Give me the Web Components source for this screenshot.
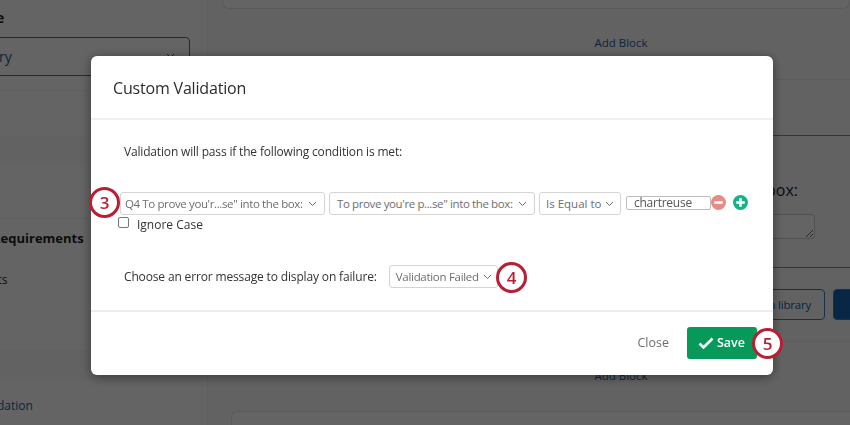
<!DOCTYPE html>
<html>
<head>
<meta charset="utf-8">
<title>Custom Validation</title>
<style>
    html, body { margin: 0; padding: 0; height: 100%; overflow: hidden; }
    body { font-family: "Open Sans", "Noto Sans", sans-serif; }
</style>
</head>
<body>
<survey-page>
    <survey-sidebar slot="side"></survey-sidebar>
    <survey-canvas slot="main"></survey-canvas>
</survey-page>

<modal-backdrop>
    <validation-modal></validation-modal>
</modal-backdrop>

<script>
//page behind the dialog
var template_page = document.createElement("template");
template_page.innerHTML = `
<style>
    :host { display: flex; width: 850px; height: 425px; overflow: hidden; background: #f6f6f6; }
    .side { display: block; width: 208px; flex: none; }
    .main { display: block; flex: 1; min-width: 0; }
</style>
<div class="side"><slot name="side"></slot></div>
<div class="main"><slot name="main"></slot></div>
`;
class SurveyPage extends HTMLElement {
    constructor() {
        super();
        this.attachShadow({ mode: "open" }).appendChild(template_page.content.cloneNode(true));
    }
}
customElements.define("survey-page", SurveyPage);

var template_sidebar = document.createElement("template");
template_sidebar.innerHTML = `
<style>
    :host { display: block; height: 425px; background: #fafafa; border-right: 1px solid #eee; box-sizing: border-box; color: #1f1f1f; font-size: 13px; overflow: hidden; }
    .title { height: 37px; line-height: 36px; font-weight: 700; margin-left: -29px; font-size: 14px; }
    .lib { display: flex; align-items: flex-start; justify-content: space-between; height: 39px; margin-left: -20px; width: 210px; box-sizing: border-box; padding-right: 14px; border: 1px solid #3a6ea5; border-radius: 4px; color: #1b5aa0; font-size: 14px; line-height: 37px; }
    .lib span { margin-left: -15px; }
    .lib svg { width: 9px; height: 6px; margin-top: 15px; }
    .gap1 { height: 14px; border-bottom: 1px solid #f0f0f0; }
    .band { height: 30px; background: #f5f5f5; margin-top: 44px; }
    .req { margin-top: 53px; padding: 9px 0 0 0; border-top: 1px solid #efefef; font-weight: 700; font-size: 13px; line-height: 20px; }
    .req span { margin-left: -8px; display: block; }
    .row { margin-top: 23px; margin-left: -26px; font-size: 12px; line-height: 18px; }
    .band2 { height: 30px; background: #f5f5f5; margin-top: 61px; }
    .link { margin-top: 17px; margin-left: -23px; color: #1b5aa0; font-size: 12px; line-height: 18px; }
</style>
<div class="title">Type</div>
<div class="lib"><span>Library</span><svg viewBox="0 0 9 6"><path d="M1 1l3.5 3.5L8 1" fill="none" stroke="#1b5aa0" stroke-width="1"/></svg></div>
<div class="gap1"></div>
<div class="band"></div>
<div class="req"><span>Requirements</span></div>
<div class="row">Limits</div>
<div class="band2"></div>
<div class="link">Validation</div>
`;
class SurveySidebar extends HTMLElement {
    constructor() {
        super();
        this.attachShadow({ mode: "open" }).appendChild(template_sidebar.content.cloneNode(true));
    }
}
customElements.define("survey-sidebar", SurveySidebar);

var template_canvas = document.createElement("template");
template_canvas.innerHTML = `
<style>
    :host { display: block; height: 425px; overflow: hidden; color: #1f1f1f; }
    .card-end { height: 8px; margin-left: 14px; border: 1px solid #e0e0e0; border-top: 0; border-radius: 0 0 6px 6px; background: #f9f9f9; }
    .add { box-sizing: border-box; width: 826px; text-align: center; color: #1b5aa0; font-size: 11.5px; line-height: 18px; }
    .a1 { margin-top: 25px; }
    .block { margin-top: 27px; margin-left: 14px; height: 263px; box-sizing: border-box; border-top: 1px solid #e6e6e6; border-bottom: 1px solid #e6e6e6; display: flex; flex-direction: column; align-items: flex-end; }
    .q { width: 100%; height: 133px; box-sizing: border-box; margin-top: 55px; border-top: 1px solid #5b8fc7; border-bottom: 1px solid #5b8fc7; display: flex; flex-direction: column; align-items: flex-end; }
    .qt { font-size: 16px; line-height: 22px; margin-top: 43px; padding-right: 52px; }
    textarea { width: 100px; height: 25px; margin: 13px 35px 0 0; padding: 0; box-sizing: border-box; border: 1px solid #c8c8c8; border-radius: 3px; background: #fafafa; display: block; }
    .btns { display: flex; gap: 8px; margin-top: 21px; margin-right: -43px; }
    .b { height: 31px; box-sizing: border-box; border: 1px solid #3a7ac0; border-radius: 4px; color: #1b5aa0; font-size: 11.5px; letter-spacing: -.2px; line-height: 29px; padding: 0 13px; white-space: nowrap; }
    .b.fill { width: 60px; background: #1460b0; }
    .a2 { margin-top: 25px; }
    .card-next { margin-top: 26px; margin-left: 23px; height: 30px; border: 1px solid #e0e0e0; border-radius: 6px 0 0 0; border-right: 0; background: #f9f9f9; }
</style>
<div class="card-end"></div>
<div class="add a1">Add Block</div>
<div class="block">
    <div class="q">
        <div class="qt">box:</div>
        <textarea></textarea>
    </div>
    <div class="btns"><div class="b">Import from library</div><div class="b fill"></div></div>
</div>
<div class="add a2">Add Block</div>
<div class="card-next"></div>
`;
class SurveyCanvas extends HTMLElement {
    constructor() {
        super();
        this.attachShadow({ mode: "open" }).appendChild(template_canvas.content.cloneNode(true));
    }
}
customElements.define("survey-canvas", SurveyCanvas);

//dialog
var template_backdrop = document.createElement("template");
template_backdrop.innerHTML = `
<style>
    :host { display: block; position: fixed; left: 0; top: 0; width: 850px; height: 425px; background: rgba(0, 0, 0, 0.6); }
    .wrap { box-sizing: border-box; height: 100%; padding: 56px 77px 50px 91px; }
</style>
<div class="wrap"><slot></slot></div>
`;
class ModalBackdrop extends HTMLElement {
    constructor() {
        super();
        this.attachShadow({ mode: "open" }).appendChild(template_backdrop.content.cloneNode(true));
    }
}
customElements.define("modal-backdrop", ModalBackdrop);

var template_select = document.createElement("template");
template_select.innerHTML = `
<style>
    :host { display: inline-flex; align-items: center; justify-content: space-between; box-sizing: border-box; height: 23px; padding: 0 7px 0 6px; background: #fff; border: 1px solid #d4d4d4; border-radius: 3px; color: #6e6e6e; font-size: 11.5px; white-space: nowrap; }
    svg { width: 9px; height: 6px; margin-left: 4px; flex: none; }
</style>
<slot></slot>
<svg viewBox="0 0 9 6"><path d="M1 1l3.5 3.5L8 1" fill="none" stroke="#6e6e6e" stroke-width="1"/></svg>
`;
class SelectBox extends HTMLElement {
    constructor() {
        super();
        this.attachShadow({ mode: "open" }).appendChild(template_select.content.cloneNode(true));
    }
}
customElements.define("select-box", SelectBox);

var template_callout = document.createElement("template");
template_callout.innerHTML = `
<style>
    :host { display: flex; align-items: center; justify-content: center; position: absolute; box-sizing: border-box; width: 31px; height: 31px; background: #fff; border: 3px solid #b81f33; border-radius: 50%; color: #b81f33; font-size: 17px; font-weight: 600; }
</style>
<slot></slot>
`;
class StepCallout extends HTMLElement {
    constructor() {
        super();
        this.attachShadow({ mode: "open" }).appendChild(template_callout.content.cloneNode(true));
    }
}
customElements.define("step-callout", StepCallout);

var template_modal = document.createElement("template");
template_modal.innerHTML = `
<style>
    :host { display: block; position: relative; width: 682px; height: 319px; background: #fff; border-radius: 6px; box-shadow: 0 2px 12px rgba(0,0,0,.45); color: #333; font-size: 12px; }
    header { box-sizing: border-box; height: 64px; padding: 21px 22px 0; border-bottom: 2px solid #f0f0f0; font-size: 16px; letter-spacing: -.18px; line-height: 22px; color: #2b2b2b; }
    .body { box-sizing: border-box; height: 192px; padding: 23px 0 0 33px; border-bottom: 2px solid #ececec; }
    .lead { line-height: 18px; letter-spacing: -.17px; }
    .cond { display: flex; align-items: center; margin: 31px 0 0 -4px; }
    .cond select-box + select-box { margin-left: 4px; }
    .s1 { width: 205px; padding-left: 4px; letter-spacing: -.38px; }
    .s2 { width: 206px; padding-left: 7px; letter-spacing: -.38px; }
    .s3 { width: 82px; }
    .val { box-sizing: border-box; width: 85px; height: 14px; margin: -2px 0 0 5px; padding-left: 7px; border: 1px solid #bdbdbd; border-radius: 2px; color: #555; font-size: 12px; letter-spacing: -.25px; line-height: 11px; }
    .round { width: 15px; height: 15px; flex: none; margin-top: -2px; }
    .plus { margin-left: 7px; }
    .ignore { display: flex; align-items: flex-start; margin: 1px 0 0 -6px; line-height: 18px; }
    .box { box-sizing: border-box; width: 11px; height: 11px; margin-top: 1px; border: 1px solid #767676; border-radius: 2px; }
    .ignore span { margin-left: 8px; }
    .err { display: flex; align-items: center; margin-top: 31px; letter-spacing: -.15px; }
    .err select-box { margin-left: 12px; width: 109px; letter-spacing: -.3px; }
    footer { display: flex; justify-content: flex-end; align-items: center; height: 63px; box-sizing: border-box; padding: 0 16px 2px 0; }
    .close { color: #6e6e6e; font-size: 12.5px; margin-right: 18px; }
    .save { display: flex; align-items: center; box-sizing: border-box; width: 70px; height: 32px; padding-left: 11px; background: #07995a; border-radius: 3px; color: #fff; font-size: 12.5px; font-weight: 600; }
    .save svg { width: 16px; height: 12px; margin-right: 3px; }
    .c3 { left: -2px; top: 131px; }
    .c4 { left: 405px; top: 206px; }
    .c5 { left: 661px; top: 272px; }
</style>
<header>Custom Validation</header>
<div class="body">
    <div class="lead">Validation will pass if the following condition is met:</div>
    <div class="cond">
        <select-box class="s1">Q4 To prove you'r...se" into the box:</select-box>
        <select-box class="s2">To prove you're p...se" into the box:</select-box>
        <select-box class="s3">Is Equal to</select-box>
        <div class="val">chartreuse</div>
        <svg class="round minus" viewBox="0 0 14 14"><circle cx="7" cy="7" r="7" fill="#e98b85"/><rect x="3" y="5.8" width="8" height="2.4" fill="#fff"/></svg>
        <svg class="round plus" viewBox="0 0 14 14"><circle cx="7" cy="7" r="7" fill="#15b28a"/><path d="M3 7h8M7 3v8" stroke="#fff" stroke-width="2.4"/></svg>
    </div>
    <div class="ignore"><div class="box"></div><span>Ignore Case</span></div>
    <div class="err"><span>Choose an error message to display on failure:</span><select-box>Validation Failed</select-box></div>
</div>
<footer>
    <div class="close">Close</div>
    <div class="save"><svg viewBox="0 0 16 12"><path d="M1.5 6.5l4 4L14.5 1.5" fill="none" stroke="#fff" stroke-width="2.6"/></svg>Save</div>
</footer>
<step-callout class="c3">3</step-callout>
<step-callout class="c4">4</step-callout>
<step-callout class="c5">5</step-callout>
`;
class ValidationModal extends HTMLElement {
    constructor() {
        super();
        this.attachShadow({ mode: "open" }).appendChild(template_modal.content.cloneNode(true));
    }
}
customElements.define("validation-modal", ValidationModal);
</script>
</body>
</html>
